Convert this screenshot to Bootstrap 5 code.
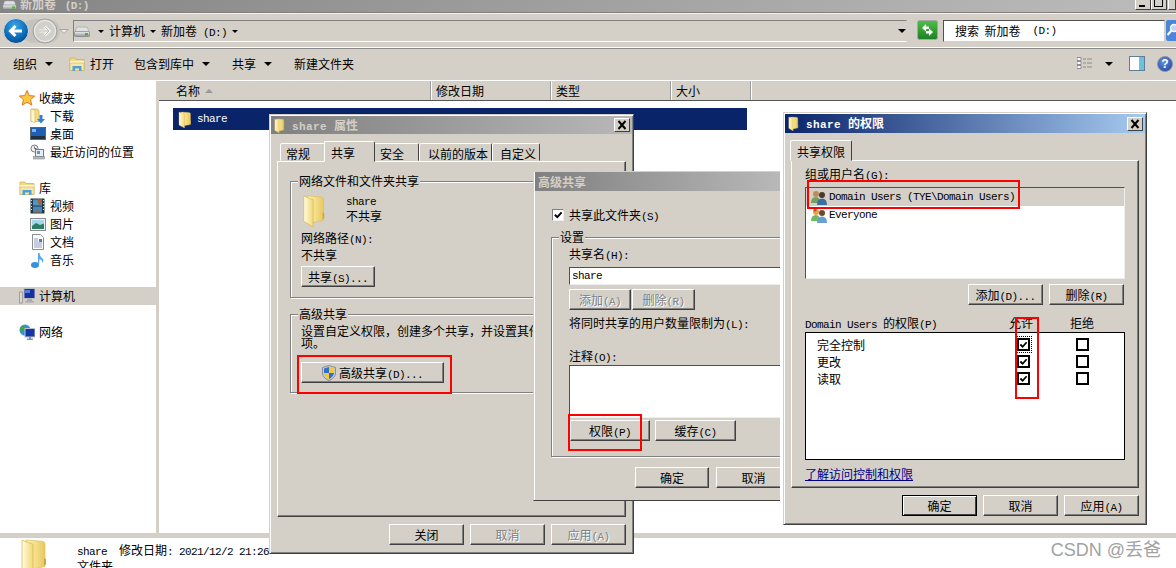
<!DOCTYPE html>
<html lang="zh-CN">
<head>
<meta charset="UTF-8">
<title>新加卷 (D:)</title>
<link href="https://cdn.jsdelivr.net/npm/bootstrap@5.3.0/dist/css/bootstrap.min.css" rel="stylesheet">
<style>
:root { --face: #d4d0c8; }
body { margin: 0; width: 1176px; height: 568px; overflow: hidden; position: relative; background: #fff; color: #000;
  font-family: "Noto Sans CJK SC", "Liberation Sans", sans-serif; font-size: 12px; line-height: 14px; }
.ltn { font-family: "Liberation Mono", "Noto Sans CJK SC", monospace; font-size: 11px; letter-spacing: -.6px; line-height: 1; }
.defs { width: 0; height: 0; display: block; }
svg { flex-shrink: 0; display: block; }

/* explorer */
.shell { width: 1176px; height: 568px; }
.ex-title { height: 12px; background: linear-gradient(90deg, #858585, #bcbcbc); overflow: hidden; padding-left: 2px; }
.ex-title b { color: var(--face); margin: -3px 0 0 3px; }
.ex-title .ltn { font-weight: 700; }
.winctl { width: 16px; height: 14px; margin-top: -4px; background: var(--face); border: 1px solid; border-color: #fff #404040 #404040 #fff; position: relative; }
.winctl i { position: absolute; display: block; }
.ctl-min i { left: 3px; bottom: 2px; width: 6px; height: 2px; background: #000; }
.ctl-max i { left: 2px; top: 1px; width: 9px; height: 9px; border: 1px solid #000; border-top-width: 2px; }
.ctl-close { width: 8px; margin-left: 1px; }
.ex-addr { height: 36px; background: var(--face); border-top: 1px solid #808080; box-shadow: inset 0 1px 0 #f2f2f2, inset 0 -1px 0 #fff; padding: 4px 0 3px 0; }
.navbtns { margin: -1px 0 0 2px; }
.addr-box { width: 834px; height: 22px; margin-top: 3px; border: 1px solid; border-color: #808080 var(--face) #fff #808080; gap: 5px; }
.tri { width: 0; height: 0; border-left: 4px solid transparent; border-right: 4px solid transparent; border-top: 4px solid #000; flex-shrink: 0; }
.tri-sm { border-left-width: 3px; border-right-width: 3px; border-top-width: 3px; }
.tri-first { margin-left: 3px; }
.tri-end { margin-left: auto; }
.refresh { margin: 3px 0 0 10px; }
.search-box { width: 222px; height: 22px; margin: 3px 0 0 5px; background: #fff; border: 1px solid; border-color: #505050 var(--face) var(--face) #505050; padding-left: 11px; }
.search-go { margin: 3px 0 0 1px; overflow: hidden; }
.ex-tools { height: 33px; background: var(--face); border-top: 1px solid #8a8a8a; border-bottom: 1px solid #fff; padding: 0 0 2px 13px; }
.tool-menu { gap: 8px; }
.t1 { margin-right: 16px; }
.t2 { margin-right: 20px; gap: 5px; }
.t3 { margin-right: 22px; }
.t4 { margin-right: 22px; }
.tool-right { gap: 12px; margin-left: auto; padding-right: 3px; }
.help { width: 16px; height: 16px; background: radial-gradient(circle at 40% 35%, #5f8ee0, #1b3f9c); border: 1px solid #8d8d9c; color: #fff; font: bold 12px/14px "Liberation Sans", sans-serif; text-align: center; }
.ex-main { height: 452px; }
.side { width: 156px; padding-top: 8px; background: #fff; }
.side-row { height: 18px; gap: 4px; }
.lvl0 { padding-left: 19px; }
.lvl1 { padding-left: 30px; }
.side-gap { height: 18px; }
.side-on { background: var(--face); }
.split { width: 3px; background: var(--face); }
.files { width: 1017px; }
.col-heads { height: 20px; background: var(--face); border-bottom: 1px solid #555; }
.head-cell { height: 19px; border-right: 1px solid #9c9c9c; box-shadow: 1px 0 0 #fff; padding-left: 5px; }
.hc-name { width: 272px; padding-left: 17px; gap: 5px; }
.hc-date { width: 120px; }
.hc-type { width: 120px; }
.hc-size { width: 80px; }
.tri-up { border-top: 0; border-bottom: 4px solid #999; }
.sel-row { width: 574px; height: 22px; margin: 7px 0 0 14px; padding-left: 5px; background: #0a246a; color: #fff; gap: 5px; }
.band { height: 5px; background: var(--face); }
.details { height: 30px; overflow: hidden; padding-left: 20px; }
.details-txt { margin-left: 29px; padding-top: 4px; line-height: 16px; }
.csdn { margin-left: auto; margin-top: 1px; padding-right: 15px; color: #a2a2a2; font: 18px/22px "Liberation Sans", "Noto Sans CJK SC", sans-serif; }

/* dialogs */
.dlg { position: absolute; background: var(--face); border: 1px solid; border-color: var(--face) #404040 #404040 var(--face); box-shadow: inset 1px 1px 0 #fff, inset -1px -1px 0 #808080; padding: 1px; }
.dlg-share { left: 269px; top: 114px; width: 365px; height: 440px; }
.dlg-adv { left: 533px; top: 171px; width: 247px; height: 330px; overflow: hidden; border-right: 0; box-shadow: inset 1px 1px 0 #fff; padding: 0 0 0 1px; z-index: 2; }
.dlg-perm { left: 783px; top: 112px; width: 364px; height: 413px; z-index: 3; }
.dlg-head { height: 18px; padding: 0 2px 0 3px; gap: 7px; background: linear-gradient(90deg, #808080, #b8b8b8); color: var(--face); font-weight: 700; flex-shrink: 0; }
.dlg-head .ltn { font-weight: 700; letter-spacing: .4px; }
.head-19 { height: 19px; }
.head-active { background: linear-gradient(90deg, #0a246a, #a6caf0); color: #fff; }
.x-btn { width: 16px; height: 14px; margin-left: auto; background: var(--face); border: 1px solid; border-color: #fff #404040 #404040 #fff; }
.tabs { border: 0; margin: 7px 6px 0; padding-left: 3px; height: 20px; align-items: flex-end; flex-wrap: nowrap; }
.tabs-perm { margin-top: 8px; padding-left: 0; height: 19px; }
.tabs .nav-link { height: 18px; padding: 0 0 0 5px; margin: 0; text-align: left; color: #000; line-height: 20px; background: var(--face); border: 1px solid; border-color: #fff #404040 transparent #fff; border-radius: 2px 2px 0 0; }
.tabs .nav-link.active { height: 21px; margin: 0 -1px -1px -1px; padding-left: 6px; line-height: 21px; color: #000; background: var(--face); border-color: #fff #404040 var(--face) #fff; position: relative; z-index: 1; }
.tabs .tw45 { width: 45px; }
.tabs .tw51 { width: 51px; }
.tabs .tw-safe { width: 45px; padding-left: 5px; }
.tabs .tw73 { width: 73px; padding-left: 8px; }
.tabs .tw48 { width: 48px; padding-left: 7px; }
.tabs .tw62 { width: 62px; }
.panel { margin: 0 6px; border: 1px solid; border-color: #fff #404040 #404040 #fff; box-shadow: inset -1px -1px 0 #808080; }
.panel-share { height: 356px; padding: 19px 0 0 12px; }
.panel-perm { height: 328px; padding: 6px 0 0 13px; }
.grp { position: relative; border: 1px solid #808080; box-shadow: 1px 1px 0 #fff, inset 1px 1px 0 #fff; }
.grp-net { width: 325px; height: 117px; padding: 12px 0 0 10px; margin-bottom: 16px; }
.grp-more { width: 325px; height: 79px; padding: 10px 0 0 10px; }
.grp-set { width: 300px; height: 220px; margin: 16px 0 0 16px; padding: 9px 0 0 17px; }
.grp-title { position: absolute; left: 7px; top: -8px; background: var(--face); padding: 0 1px; }
.share-row { height: 33px; gap: 20px; margin-left: 1px; }
.share-txt { padding-top: 3px; line-height: 15px; }
.net-path { margin-top: 2px; line-height: 17px; }
.xbtn.btn { height: 21px; padding: 0; border-radius: 0; flex-shrink: 0; font-size: 12px; line-height: 17px; color: #000; background: var(--face); border: 1px solid; border-color: #fff #404040 #404040 #fff; box-shadow: inset -1px -1px 0 #808080; }
.xbtn.btn:disabled { color: #808080; text-shadow: 1px 1px 0 #fff; opacity: 1; background: var(--face); border-color: #fff #404040 #404040 #fff; }
.w74 { width: 74px; } .w75 { width: 75px; } .w62 { width: 62px; } .w63 { width: 63px; } .w80 { width: 80px; } .w81 { width: 81px; } .w143 { width: 143px; }
.share-btn { margin-top: 3px; }
.more-txt { line-height: 12px; height: 24px; width: 315px; }
.more-btn { margin-top: 13px; gap: 3px; }
.foot { margin: 7px 6px 0; gap: 6px; justify-content: flex-end; }
.gap-5px { gap: 5px; }
.redbox { position: absolute; border: 2px solid #f00; z-index: 5; pointer-events: none; }
.r-more { left: 27px; top: 240px; width: 155px; height: 39px; }
.r-perm { left: 34px; top: 242px; width: 74px; height: 37px; }
.r-user { left: 23px; top: 67px; width: 213px; height: 29px; }
.r-allow { left: 231px; top: 204px; width: 24px; height: 82px; }

.chk-row { margin: 18px 0 0 17px; height: 12px; gap: 5px; }
.win-chk.form-check-input { width: 12px; height: 12px; margin: 0; border-radius: 0; background-color: #fff; border: 1px solid; border-color: #808080 #eee #eee #808080; flex-shrink: 0; opacity: 1;
  background-image: url("data:image/svg+xml,%3Csvg xmlns='http://www.w3.org/2000/svg' viewBox='0 0 12 12'%3E%3Cpath d='M2.5 5.5l2.5 2.5 4.5-5' fill='none' stroke='%23000' stroke-width='2'/%3E%3C/svg%3E"); background-size: 11px; }
.win-box.form-check-input { width: 13px; height: 13px; margin: 0; border-radius: 0; background-color: #fff; border: 2px solid #000; opacity: 1; }
.win-box.form-check-input:checked { background-color: #fff; border-color: #000; background-size: 9px;
  background-image: url("data:image/svg+xml,%3Csvg xmlns='http://www.w3.org/2000/svg' viewBox='0 0 10 10'%3E%3Cpath d='M1.5 5l2.5 2.5 4.5-5' fill='none' stroke='%23000' stroke-width='2'/%3E%3C/svg%3E"); }
.win-box.is-focus { outline: 1px dotted #000; outline-offset: 1px; }
.name-input.form-control { width: 260px; height: 18px; min-height: 0; margin-top: 5px; padding: 0 2px; border-radius: 0; border: 1px solid; border-color: #505050 #eee #eee #505050; color: #000; font-size: 11px; line-height: 14px; }
.add-del { margin-top: 4px; gap: 1px; }
.limit-lbl { margin-top: 6px; }
.note-lbl { margin-top: 18px; }
.note-input.form-control { width: 260px; height: 53px; min-height: 0; margin-top: 1px; padding: 0; border-radius: 0; border: 1px solid; border-color: #505050 #eee #eee #505050; }
.perm-btns { margin: 2px 0 0 1px; }
.adv-foot { margin: 10px 0 0 100px; gap: 7px; }

.user-list { width: 320px; height: 92px; margin-top: 5px; background: #fff; border: 1px solid; border-color: #505050 #eee #eee #505050; border-radius: 0; }
.user-list .list-group-item { height: 18px; padding: 0 0 0 5px; gap: 1px; border: 0; border-radius: 0; color: #000; background: transparent; }
.user-list .list-group-item.active { background: var(--face); color: #000; }
.user-btns { width: 320px; margin-top: 5px; gap: 6px; justify-content: flex-end; padding-right: 1px; }
.perm-head { width: 320px; margin-top: 11px; }
.ph-name { width: 204px; }
.ph-allow { width: 61px; }
.perm-box { width: 320px; height: 128px; margin-top: 1px; background: #fff; border: 1px solid #000; padding-top: 3px; }
.perm-line { height: 17px; padding-left: 11px; }
.pl-name { width: 200px; }
.pl-allow { width: 59px; }
.learn { display: block; margin-top: 7px; color: #00008b; text-decoration: underline; }
.default-btn.btn { border: 1px solid #000; box-shadow: inset 1px 1px 0 #fff, inset -1px -1px 0 #404040; }
</style>
</head>
<body>
<svg class="defs" width="0" height="0">
  <defs>
    <linearGradient id="fgBody" x1="0" y1="0" x2="1" y2="0"><stop offset="0" stop-color="#fdf3b6"/><stop offset="1" stop-color="#e9c95f"/></linearGradient>
    <linearGradient id="fgFlap" x1="0" y1="0" x2="1" y2="0"><stop offset="0" stop-color="#fffbe0"/><stop offset="1" stop-color="#f2d875"/></linearGradient>
    <radialGradient id="backBlue" cx=".45" cy=".3" r=".8"><stop offset="0" stop-color="#3fa4e4"/><stop offset=".6" stop-color="#0a6cb8"/><stop offset="1" stop-color="#06406f"/></radialGradient>
    <linearGradient id="driveG" x1="0" y1="0" x2="0" y2="1"><stop offset="0" stop-color="#f4f4f4"/><stop offset="1" stop-color="#8c9296"/></linearGradient>
    <linearGradient id="greenG" x1="0" y1="0" x2="0" y2="1"><stop offset="0" stop-color="#4fc04a"/><stop offset="1" stop-color="#1d7f23"/></linearGradient>
  </defs>
  <symbol id="ic-folder" viewBox="0 0 28 34" preserveAspectRatio="none">
    <path d="M6 2 L22 3 Q25 3 25 6 L25 27 L10 30 Z" fill="url(#fgBody)" stroke="#d9b94f" stroke-width=".6"/>
    <path d="M2 2 L13 6 L13 34 L2 28 Z" fill="url(#fgFlap)" stroke="#d3b654" stroke-width=".7"/>
    <path d="M24 19 l2 1 l0 5 l-2 1z" fill="#c9a93f"/>
  </symbol>
  <symbol id="ic-drive" viewBox="0 0 16 11">
    <path d="M2 3 Q2 1 4 1 L12 1 Q14 1 14 3 L15 6 L1 6 Z" fill="#dfe1e2" stroke="#9ba0a4" stroke-width=".6"/>
    <rect x=".5" y="5.5" width="15" height="5" rx="1" fill="url(#driveG)" stroke="#777" stroke-width=".6"/>
    <rect x="11" y="7" width="3" height="2.4" fill="#46b530"/>
  </symbol>
  <symbol id="ic-lib" viewBox="0 0 16 16">
    <path d="M1 2 h5 l1 1.500 h8 v11 h-14z" fill="#f1d98a" stroke="#c7aa55" stroke-width=".7"/>
    <path d="M1 5 h14 v2 h-14z" fill="#fff5c9"/>
    <path d="M1 7 h14 v7.500 h-14z" fill="#f6e7a6" stroke="#c7aa55" stroke-width=".5"/>
    <path d="M3.500 10 h9 v5 h-2.500 v-2.500 h-4 v2.500 h-2.500z" fill="#4f9fd8"/>
  </symbol>
  <symbol id="ic-users" viewBox="0 0 17 17">
    <circle cx="5" cy="5" r="3" fill="#b98d5e"/><path d="M0 14 Q0 8 5 8 Q9 8 9 14z" fill="#6ea35d"/>
    <circle cx="11" cy="6" r="3" fill="#4b3a2c"/><path d="M6 16 Q6 9.500 11 9.500 Q16 9.500 16 16z" fill="#3f6d9f"/>
  </symbol>
  <symbol id="ic-everyone" viewBox="0 0 17 17">
    <circle cx="5" cy="5" r="3" fill="#e5a24e"/><path d="M0 14 Q0 8 5 8 Q9 8 9 14z" fill="#74b85d"/>
    <circle cx="11" cy="6" r="3" fill="#6b4a2c"/><path d="M6 16 Q6 9.500 11 9.500 Q16 9.500 16 16z" fill="#6a9fd0"/>
    <circle cx="4" cy="3" r="1.500" fill="#d8442e"/>
  </symbol>
  <symbol id="ic-x" viewBox="0 0 14 12">
    <path d="M3.500 2 L10.500 10 M10.500 2 L3.500 10" stroke="#000" stroke-width="2" fill="none"/>
  </symbol>
</svg>

<div class="shell d-flex flex-column">
  <div class="ex-title d-flex align-items-start">
    <svg width="15" height="10"><use href="#ic-drive"/></svg>
    <b>新加卷&nbsp;<span class="ltn">&nbsp;(D:)</span></b>
    <div class="d-flex ms-auto">
      <span class="winctl ctl-min"><i></i></span>
      <span class="winctl ctl-max"><i></i></span>
      <span class="winctl ctl-close"></span>
    </div>
  </div>

  <div class="ex-addr d-flex">
    <svg class="navbtns" width="71" height="30" viewBox="0 0 71 30">
      <rect x="20" y="3" width="38" height="24" rx="12" fill="#c5c3be"/>
      <circle cx="43" cy="15" r="12" fill="#d2d0cb" stroke="#9f9f9f"/>
      <circle cx="43" cy="15" r="10.500" fill="none" stroke="#eeeeee"/>
      <path d="M37 15 h9 M42.500 10.500 l4.500 4.500 l-4.500 4.500" fill="none" stroke="#f4f4f4" stroke-width="3"/>
      <path d="M37 15 h9 M42.500 10.500 l4.500 4.500 l-4.500 4.500" fill="none" stroke="#bbbbbb" stroke-width="1"/>
      <circle cx="14" cy="15" r="12.500" fill="url(#backBlue)" stroke="#d9d9d9"/>
      <path d="M20 15 h-11 M13.500 10 l-5 5 l5 5" fill="none" stroke="#fff" stroke-width="3"/>
      <path d="M58 13.500 h8 l-4 4z" fill="#eeeeee" stroke="#8a8a8a" stroke-width=".7"/>
    </svg>
    <div class="addr-box d-flex align-items-center">
      <svg width="16" height="11"><use href="#ic-drive"/></svg>
      <span class="tri tri-sm tri-first"></span>
      <span>计算机</span>
      <span class="tri tri-sm"></span>
      <span>新加卷<span class="ltn">&nbsp;(D:)</span></span>
      <span class="tri tri-sm"></span>
      <span class="tri tri-end"></span>
    </div>
    <svg class="refresh" width="21" height="20" viewBox="0 0 21 20">
      <rect x=".5" y=".5" width="20" height="19" rx="2" fill="url(#greenG)" stroke="#a7a7a7"/>
      <path d="M5 8 L9 4 L9 6.500 L12 6.500 L12 9 L9 9 L9 11.500 Z M16 12 L12 16 L12 13.500 L9 13.500 L9 11 L12 11 L12 8.500 Z" fill="#fff"/>
    </svg>
    <div class="search-box d-flex align-items-center">搜索&nbsp;&nbsp;新加卷<span class="ltn">&nbsp;&nbsp;(D:)</span></div>
    <svg class="search-go" width="10" height="21" viewBox="0 0 10 21">
      <rect width="12" height="21" rx="2" fill="#4b86d8"/>
      <circle cx="8" cy="8" r="3.500" fill="#bcd6f5" stroke="#fff" stroke-width="1.300"/>
      <path d="M5.500 10.500 L1.500 15" stroke="#fff" stroke-width="2"/>
    </svg>
  </div>

  <div class="ex-tools d-flex align-items-center">
    <div class="tool-menu t1 d-flex align-items-center"><span>组织</span><span class="tri"></span></div>
    <div class="t2 d-flex align-items-center"><svg width="16" height="16"><use href="#ic-lib"/></svg><span>打开</span></div>
    <div class="tool-menu t3 d-flex align-items-center"><span>包含到库中</span><span class="tri"></span></div>
    <div class="tool-menu t4 d-flex align-items-center"><span>共享</span><span class="tri"></span></div>
    <div>新建文件夹</div>
    <div class="tool-right d-flex align-items-center">
      <svg width="16" height="13" viewBox="0 0 16 13">
        <path d="M0 .5h4v3h-4z M0 4.500h4v3h-4z M0 8.500h4v3h-4z" fill="#fff" stroke="#777" stroke-width=".8"/>
        <path d="M6 2h3M10 2h5M6 6h3M10 6h5M6 10h3M10 10h5" stroke="#8a8a8a"/>
      </svg>
      <span class="tri me-1"></span>
      <svg width="16" height="15" viewBox="0 0 16 15">
        <rect x=".5" y=".5" width="15" height="14" fill="#fff" stroke="#5f7f99"/>
        <rect x="10" y="1" width="5" height="13" fill="#6fc0df"/>
      </svg>
      <span class="help rounded-circle">?</span>
    </div>
  </div>

  <div class="ex-main d-flex">
    <nav class="side">
      <div class="side-row lvl0 d-flex align-items-center">
        <svg width="16" height="16" viewBox="0 0 16 16"><path d="M8 .5 L10.200 5.600 L15.700 6.100 L11.500 9.700 L12.800 15.100 L8 12.300 L3.200 15.100 L4.500 9.700 L.3 6.100 L5.800 5.600Z" fill="#fbc83f" stroke="#e2762a"/></svg><span>收藏夹</span>
      </div>
      <div class="side-row lvl1 d-flex align-items-center">
        <svg width="16" height="16" viewBox="0 0 16 16"><path d="M1 1h6l2 1.500v11h-8z" fill="#f4dc85" stroke="#c7aa55" stroke-width=".7"/><path d="M1 1l4 1.500v12.500l-4-2z" fill="#fff5c4" stroke="#c7aa55" stroke-width=".5"/><path d="M9.500 7h3v4h2.500l-4 4.500-4-4.500h2.500z" fill="#2f83d6"/></svg><span>下载</span>
      </div>
      <div class="side-row lvl1 d-flex align-items-center">
        <svg width="16" height="14" viewBox="0 0 16 14"><rect x=".5" y=".5" width="15" height="12" fill="#1f5fb3" stroke="#5c6670"/><rect x="1" y="9" width="14" height="3" fill="#22303f"/><path d="M2 2h4v3h-4z" fill="#7ab6ee"/></svg><span>桌面</span>
      </div>
      <div class="side-row lvl1 d-flex align-items-center">
        <svg width="16" height="16" viewBox="0 0 16 16"><circle cx="4.500" cy="4.500" r="3.500" fill="#f2f2f2" stroke="#7a7a7a"/><path d="M4.500 2.500v2h2" stroke="#444" fill="none" stroke-width=".8"/><rect x="5.500" y="5.500" width="8" height="7" fill="#e8eef2" stroke="#6d7b85"/><rect x="7" y="7" width="3" height="3" fill="#4aa0d8"/><rect x="3.500" y="12.500" width="11" height="2.500" fill="#b7bcc0" stroke="#7a7a7a" stroke-width=".5"/></svg><span>最近访问的位置</span>
      </div>
      <div class="side-gap"></div>
      <div class="side-row lvl0 d-flex align-items-center">
        <svg width="16" height="16"><use href="#ic-lib"/></svg><span>库</span>
      </div>
      <div class="side-row lvl1 d-flex align-items-center">
        <svg width="16" height="16" viewBox="0 0 16 16"><rect x=".5" y=".5" width="14" height="15" fill="#1e3a40"/><rect x="3" y="1.500" width="9" height="6" fill="#4f95cc"/><rect x="3" y="8.500" width="9" height="6" fill="#3f89c9"/><path d="M7 1.500h5v4l-3 2z M3 14.500l4-3 5 3z" fill="#a5653c"/><path d="M1 2h1v1h-1zM1 5h1v1h-1zM1 8h1v1h-1zM1 11h1v1h-1zM13 2h1v1h-1zM13 5h1v1h-1zM13 8h1v1h-1zM13 11h1v1h-1z" fill="#cfe6e8"/></svg><span>视频</span>
      </div>
      <div class="side-row lvl1 d-flex align-items-center">
        <svg width="16" height="13" viewBox="0 0 16 13"><rect x=".5" y=".5" width="15" height="12" fill="#eef0f0" stroke="#8c8c8c"/><rect x="2" y="2" width="12" height="9" fill="#a8d6e8"/><path d="M2 8 L6 5 L10 7 L14 5.500 V11 H2Z" fill="#2e7d67"/></svg><span>图片</span>
      </div>
      <div class="side-row lvl1 d-flex align-items-center">
        <svg width="16" height="16" viewBox="0 0 16 16"><path d="M2.500 .5h8l3 3v12h-11z" fill="#fdfdfd" stroke="#8c8c8c"/><path d="M4 5h4M4 7h4M4 9h8M4 11h8M4 13h8" stroke="#8d9cc0"/><rect x="9" y="5" width="3" height="3" fill="#4a7fb5"/></svg><span>文档</span>
      </div>
      <div class="side-row lvl1 d-flex align-items-center">
        <svg width="16" height="16" viewBox="0 0 16 16"><ellipse cx="5" cy="13" rx="4" ry="3" fill="#3a8fd8"/><path d="M8 1 L9.500 1 Q10 5 13 7 Q14 9 12.500 11 Q12.500 8 9.500 7 L9 13 H8Z" fill="#52a8e6"/></svg><span>音乐</span>
      </div>
      <div class="side-gap"></div>
      <div class="side-row side-on lvl0 d-flex align-items-center">
        <svg width="16" height="16" viewBox="0 0 16 16"><rect x=".5" y="4" width="3" height="11" fill="#d8d8d8" stroke="#8a8a8a" stroke-width=".7"/><rect x="5" y=".5" width="11" height="10" fill="#1b2f9e" stroke="#b9bcc0"/><path d="M6 2h5v3h-5z" fill="#4a7fe0"/><path d="M8 11h5v2h2v1.500h-9v-1.500h2z" fill="#a9adb1"/></svg><span>计算机</span>
      </div>
      <div class="side-gap"></div>
      <div class="side-row lvl0 d-flex align-items-center">
        <svg width="16" height="16" viewBox="0 0 16 16"><circle cx="6" cy="6" r="5.500" fill="#3b8fd8"/><path d="M2 3 Q5 1 6 3 Q7 6 4 7 Q1 8 1 5z M7 8 Q10 7 10 10 Q8 12 7 11z" fill="#3fa34a"/><rect x="6" y="4.500" width="10" height="8.500" fill="#1634a8" stroke="#b5c2d0"/><path d="M10 13h2v1.500h2v1.500h-6v-1.500h2z" fill="#8a949c"/></svg><span>网络</span>
      </div>
    </nav>
    <div class="split"></div>
    <div class="files">
      <div class="col-heads d-flex">
        <div class="head-cell hc-name d-flex align-items-center"><span>名称</span><span class="tri tri-up"></span></div>
        <div class="head-cell hc-date d-flex align-items-center">修改日期</div>
        <div class="head-cell hc-type d-flex align-items-center">类型</div>
        <div class="head-cell hc-size d-flex align-items-center">大小</div>
      </div>
      <div class="sel-row d-flex align-items-center">
        <svg width="14" height="17"><use href="#ic-folder"/></svg>
        <span class="ltn">share</span>
      </div>
    </div>
  </div>

  <div class="band"></div>
  <div class="details d-flex">
    <svg width="28" height="36"><use href="#ic-folder"/></svg>
    <div class="details-txt">
      <div><span class="ltn">share&nbsp;&nbsp;</span>修改日期<span class="ltn">:&nbsp;2021/12/2&nbsp;21:26</span></div>
      <div>文件夹</div>
    </div>
    <div class="csdn">CSDN @丢爸</div>
  </div>
</div>

<!-- share properties -->
<section class="dlg dlg-share">
  <div class="dlg-head d-flex align-items-center">
    <svg width="11" height="15"><use href="#ic-folder"/></svg>
    <span><span class="ltn">share&nbsp;</span>属性</span>
    <span class="x-btn d-flex"><svg width="14" height="12"><use href="#ic-x"/></svg></span>
  </div>
  <ul class="nav nav-tabs tabs">
    <li class="nav-item"><a class="nav-link tw45" href="#">常规</a></li>
    <li class="nav-item"><a class="nav-link active tw51" href="#">共享</a></li>
    <li class="nav-item"><a class="nav-link tw-safe" href="#">安全</a></li>
    <li class="nav-item"><a class="nav-link tw73" href="#">以前的版本</a></li>
    <li class="nav-item"><a class="nav-link tw48" href="#">自定义</a></li>
  </ul>
  <div class="panel panel-share">
    <div class="grp grp-net">
      <span class="grp-title">网络文件和文件夹共享</span>
      <div class="share-row d-flex">
        <svg width="24" height="33"><use href="#ic-folder"/></svg>
        <div class="share-txt"><div class="ltn">share</div><div>不共享</div></div>
      </div>
      <div class="net-path">网络路径<span class="ltn">(N):</span><br>不共享</div>
      <button type="button" class="btn xbtn w74 share-btn">共享<span class="ltn">(S)...</span></button>
    </div>
    <div class="grp grp-more">
      <span class="grp-title">高级共享</span>
      <div class="more-txt">设置自定义权限，创建多个共享，并设置其他高级共享选项。</div>
      <button type="button" class="btn xbtn w143 more-btn d-flex align-items-center justify-content-center">
        <svg width="14" height="16" viewBox="0 0 14 16"><path d="M7 .5 L13.500 2.500 V8 Q13.500 13 7 15.500 Q.5 13 .5 8 V2.500Z" fill="#c9ccd0" stroke="#8a8f95"/><path d="M7 2 V8 H2 V3.500Z" fill="#2f6fd0"/><path d="M7 2 L12 3.500 V8 H7Z" fill="#f5c92f"/><path d="M2 8 H7 V14 Q3 12.500 2 8Z" fill="#f5c92f"/><path d="M7 8 H12 Q11 12.500 7 14Z" fill="#2f6fd0"/></svg>
        <span>高级共享<span class="ltn">(D)...</span></span>
      </button>
    </div>
  </div>
  <div class="foot d-flex">
    <button type="button" class="btn xbtn w75">关闭</button>
    <button type="button" class="btn xbtn w75" disabled>取消</button>
    <button type="button" class="btn xbtn w75" disabled>应用<span class="ltn">(A)</span></button>
  </div>
  <div class="redbox r-more"></div>
</section>

<!-- advanced sharing, cut off by the right window -->
<section class="dlg dlg-adv">
  <div class="dlg-head head-19 d-flex align-items-center">高级共享</div>
  <div class="chk-row d-flex align-items-center">
    <input class="form-check-input win-chk" type="checkbox" checked disabled>
    <span>共享此文件夹<span class="ltn">(S)</span></span>
  </div>
  <div class="grp grp-set">
    <span class="grp-title">设置</span>
    <div>共享名<span class="ltn">(H):</span></div>
    <input class="form-control name-input ltn" type="text" value="share">
    <div class="add-del d-flex">
      <button type="button" class="btn xbtn w62" disabled>添加<span class="ltn">(A)</span></button>
      <button type="button" class="btn xbtn w63" disabled>删除<span class="ltn">(R)</span></button>
    </div>
    <div class="limit-lbl text-nowrap">将同时共享的用户数量限制为<span class="ltn">(L):</span></div>
    <div class="note-lbl">注释<span class="ltn">(O):</span></div>
    <div class="form-control note-input"></div>
    <div class="perm-btns d-flex gap-5px">
      <button type="button" class="btn xbtn w80">权限<span class="ltn">(P)</span></button>
      <button type="button" class="btn xbtn w81">缓存<span class="ltn">(C)</span></button>
    </div>
  </div>
  <div class="adv-foot d-flex">
    <button type="button" class="btn xbtn w74">确定</button>
    <button type="button" class="btn xbtn w75">取消</button>
  </div>
  <div class="redbox r-perm"></div>
</section>

<!-- share permissions -->
<section class="dlg dlg-perm">
  <div class="dlg-head head-19 head-active d-flex align-items-center">
    <svg width="11" height="15"><use href="#ic-folder"/></svg>
    <span><span class="ltn">share&nbsp;</span>的权限</span>
    <span class="x-btn d-flex"><svg width="14" height="12"><use href="#ic-x"/></svg></span>
  </div>
  <ul class="nav nav-tabs tabs tabs-perm">
    <li class="nav-item"><a class="nav-link active tw62" href="#">共享权限</a></li>
  </ul>
  <div class="panel panel-perm">
    <div>组或用户名<span class="ltn">(G):</span></div>
    <div class="list-group user-list">
      <div class="list-group-item active d-flex align-items-center">
        <svg width="17" height="17"><use href="#ic-users"/></svg>
        <span class="ltn">Domain Users (TYE\Domain Users)</span>
      </div>
      <div class="list-group-item d-flex align-items-center">
        <svg width="17" height="17"><use href="#ic-everyone"/></svg>
        <span class="ltn">Everyone</span>
      </div>
    </div>
    <div class="user-btns d-flex">
      <button type="button" class="btn xbtn w75">添加<span class="ltn">(D)...</span></button>
      <button type="button" class="btn xbtn w75">删除<span class="ltn">(R)</span></button>
    </div>
    <div class="perm-head d-flex">
      <div class="ph-name"><span class="ltn">Domain Users&nbsp;</span>的权限<span class="ltn">(P)</span></div>
      <div class="ph-allow">允许</div>
      <div>拒绝</div>
    </div>
    <div class="perm-box">
      <div class="perm-line d-flex align-items-center">
        <div class="pl-name">完全控制</div>
        <div class="pl-allow d-flex"><input class="form-check-input win-box is-focus" type="checkbox" checked></div>
        <input class="form-check-input win-box" type="checkbox">
      </div>
      <div class="perm-line d-flex align-items-center">
        <div class="pl-name">更改</div>
        <div class="pl-allow d-flex"><input class="form-check-input win-box" type="checkbox" checked></div>
        <input class="form-check-input win-box" type="checkbox">
      </div>
      <div class="perm-line d-flex align-items-center">
        <div class="pl-name">读取</div>
        <div class="pl-allow d-flex"><input class="form-check-input win-box" type="checkbox" checked></div>
        <input class="form-check-input win-box" type="checkbox">
      </div>
    </div>
    <a class="learn" href="#">了解访问控制和权限</a>
  </div>
  <div class="foot d-flex">
    <button type="button" class="btn xbtn default-btn w75">确定</button>
    <button type="button" class="btn xbtn w75">取消</button>
    <button type="button" class="btn xbtn w75">应用<span class="ltn">(A)</span></button>
  </div>
  <div class="redbox r-user"></div>
  <div class="redbox r-allow"></div>
</section>
</body>
</html>
